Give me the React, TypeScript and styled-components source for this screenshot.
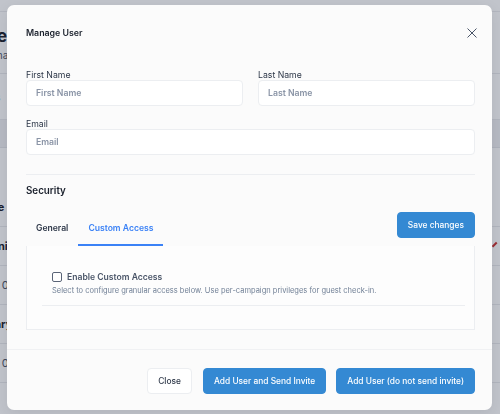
import React, { useState } from "react";
import styled, { createGlobalStyle } from "styled-components";

const GlobalStyle = createGlobalStyle`
  html, body {
    margin: 0;
    padding: 0;
    width: 500px;
    height: 414px;
    overflow: hidden;
    font-family: Inter, "Noto Sans", "Liberation Sans", sans-serif;
    background: #ffffff;
  }
  * { box-sizing: border-box; }
`;

/* ---------- page behind the modal ---------- */

const Page = styled.div`
  width: 500px;
  height: 414px;
  background: #f7f8fa;
  display: flex;
  flex-direction: column;
  padding-top: 11px;
`;

const PageHead = styled.div`
  padding: 14px 0 12px;
  margin-left: -60px;
  border-top: 1px solid #e4e6ea;
  border-bottom: 1px solid #e2e4e8;
`;

const PageTitle = styled.div`
  font-size: 17px;
  font-weight: 700;
  color: #1a202c;
  line-height: 20px;
`;

const PageSub = styled.div`
  font-size: 10px;
  color: #4a5568;
  margin-top: 3px;
`;

const PageFilter = styled.div`
  margin-left: -40px;
  height: 46px;
  display: flex;
  align-items: center;
  font-size: 10px;
  color: #718096;
  border-bottom: 1px solid #e2e4e8;
`;

const TableHeadBand = styled.div`
  height: 28px;
  background: #e9ebef;
  border-bottom: 1px solid #dde0e5;
  margin-bottom: 40px;
`;

const Row = styled.div<{ $accent?: boolean }>`
  height: 39px;
  display: flex;
  align-items: center;
  justify-content: space-between;
  border-bottom: 1px solid #e2e4e8;
  font-size: 11px;
  font-weight: ${(p) => (p.$accent ? 700 : 400)};
  color: ${(p) => (p.$accent ? "#1a202c" : "#4a5568")};
`;

const RowLead = styled.span`
  margin-left: -30px;
`;

const RowMark = styled.span<{ $show?: boolean }>`
  width: 6px;
  height: 6px;
  margin-right: 1px;
  border-top: 2px solid ${(p) => (p.$show ? "#c53030" : "transparent")};
  transform: rotate(-45deg);
`;

/* ---------- modal ---------- */

const Overlay = styled.div`
  position: fixed;
  inset: 0;
  background: rgba(30, 40, 62, 0.25);
`;

const Modal = styled.div`
  position: fixed;
  top: 5px;
  left: 7px;
  width: 485px;
  height: 405px;
  background: #fbfbfb;
  border-radius: 7px;
  display: flex;
  flex-direction: column;
  box-shadow: 0 4px 14px rgba(0, 0, 0, 0.08);
`;

const Header = styled.div`
  display: flex;
  align-items: center;
  justify-content: space-between;
  padding: 18px 14px 0 19px;
  height: 38px;
`;

const Title = styled.div`
  font-size: 8.8px;
  line-height: 20px;
  font-weight: 600;
  color: #1a202c;
`;

const CloseIcon = styled.button`
  border: none;
  background: none;
  padding: 0;
  width: 12px;
  height: 12px;
  display: flex;
  cursor: pointer;
`;

const Body = styled.div`
  padding: 26px 17px 0 19px;
  flex: 1;
  display: flex;
  flex-direction: column;
`;

const FieldRow = styled.div`
  display: grid;
  grid-template-columns: 1fr 1fr;
  gap: 15px;
`;

const Field = styled.div`
  display: flex;
  flex-direction: column;
`;

const Label = styled.label`
  font-size: 8.7px;
  line-height: 13px;
  color: #2d3748;
  margin-bottom: -2px;
`;

const Input = styled.input`
  height: 26px;
  border: 1px solid #eceef1;
  border-radius: 4px;
  background: #ffffff;
  padding: 0 9px;
  font-family: inherit;
  font-size: 8.7px;
  font-weight: 600;
  color: #2d3748;
  outline: none;

  &::placeholder {
    color: #8a94a6;
  }
`;

const FieldStack = styled.div`
  display: flex;
  flex-direction: column;
  gap: 12px;
`;

const Divider = styled.hr`
  border: none;
  border-top: 1px solid #eceef1;
  margin: 19px 0 7px;
`;

const SectionTitle = styled.div`
  font-size: 9.8px;
  font-weight: 600;
  line-height: 18px;
  color: #1a202c;
`;

const TabsBar = styled.div`
  display: flex;
  align-items: flex-start;
  justify-content: space-between;
  margin-top: 12px;
`;

const TabList = styled.div`
  display: flex;
`;

const Tab = styled.button<{ $active?: boolean }>`
  border: none;
  background: none;
  font-family: inherit;
  font-size: 8.6px;
  font-weight: 600;
  height: 34px;
  padding: 0 10px;
  color: ${(p) => (p.$active ? "#3b82f6" : "#2d3748")};
  border-bottom: 2px solid ${(p) => (p.$active ? "#3b82f6" : "transparent")};
  cursor: pointer;
`;

const Button = styled.button<{ $variant?: "primary" | "ghost" }>`
  height: 26px;
  padding: 0 10px;
  border-radius: 4px;
  font-family: inherit;
  font-size: 8.4px;
  font-weight: 500;
  cursor: pointer;
  white-space: nowrap;
  border: 1px solid
    ${(p) => (p.$variant === "ghost" ? "#eceef1" : "#3489d3")};
  background: ${(p) => (p.$variant === "ghost" ? "#ffffff" : "#3489d3")};
  color: ${(p) => (p.$variant === "ghost" ? "#2d3748" : "#ffffff")};
`;

const Panel = styled.div`
  height: 84px;
  border: 1px solid #eceef1;
  border-top: none;
  background: #fdfdfd;
  padding: 26px 9px 0 15px;
`;

const CheckItem = styled.div`
  padding: 0 0 10px 10px;
  border-bottom: 1px solid #eceef1;
`;

const CheckLine = styled.label`
  display: flex;
  align-items: center;
  gap: 5px;
  font-size: 8.6px;
  font-weight: 600;
  color: #4a5568;
  cursor: pointer;
`;

const Box = styled.input`
  appearance: none;
  margin: 0;
  width: 10px;
  height: 10px;
  border: 1px solid #5a6477;
  border-radius: 2px;
  background: #ffffff;

  &:checked {
    background: #3182ce;
    border-color: #3182ce;
  }
`;

const Hint = styled.div`
  margin-top: 4px;
  font-size: 7.5px;
  color: #718096;
`;

const Footer = styled.div`
  border-top: 1px solid #f0f1f3;
  padding: 18px 17px 16px;
  display: flex;
  justify-content: flex-end;
  gap: 10px;
`;

const CloseButton = styled(Button)`
  margin-right: 1px;
`;

export default function App() {
  const [tab, setTab] = useState("custom");
  const [custom, setCustom] = useState(false);

  return (
    <>
      <GlobalStyle />
      <Page>
        <PageHead>
          <PageTitle>Manage Users</PageTitle>
          <PageSub>Add and manage your team</PageSub>
        </PageHead>
        <PageFilter>
          <span>All users</span>
        </PageFilter>
        <TableHeadBand />
        <Row $accent>
          <RowLead>Active</RowLead>
          <RowMark />
        </Row>
        <Row $accent>
          <RowLead>Admini</RowLead>
          <RowMark $show />
        </Row>
        <Row>
          <RowLead>Team 0</RowLead>
          <RowMark />
        </Row>
        <Row $accent>
          <RowLead>Primary</RowLead>
          <RowMark />
        </Row>
        <Row>
          <RowLead>Team 0</RowLead>
          <RowMark />
        </Row>
      </Page>
      <Overlay />
      <Modal>
        <Header>
          <Title>Manage User</Title>
          <CloseIcon aria-label="Close">
            <svg width="12" height="12" viewBox="0 0 12 12">
              <path
                d="M1.5 1.5 L10.5 10.5 M10.5 1.5 L1.5 10.5"
                stroke="#4a5568"
                strokeWidth="1"
                fill="none"
              />
            </svg>
          </CloseIcon>
        </Header>
        <Body>
          <FieldStack>
            <FieldRow>
              <Field>
                <Label>First Name</Label>
                <Input placeholder="First Name" />
              </Field>
              <Field>
                <Label>Last Name</Label>
                <Input placeholder="Last Name" />
              </Field>
            </FieldRow>
            <Field>
              <Label>Email</Label>
              <Input placeholder="Email" />
            </Field>
          </FieldStack>
          <Divider />
          <SectionTitle>Security</SectionTitle>
          <TabsBar>
            <TabList>
              <Tab $active={tab === "general"} onClick={() => setTab("general")}>
                General
              </Tab>
              <Tab $active={tab === "custom"} onClick={() => setTab("custom")}>
                Custom Access
              </Tab>
            </TabList>
            <Button>Save changes</Button>
          </TabsBar>
          <Panel>
            <CheckItem>
              <CheckLine>
                <Box
                  type="checkbox"
                  checked={custom}
                  onChange={(e) => setCustom(e.target.checked)}
                />
                Enable Custom Access
              </CheckLine>
              <Hint>
                Select to configure granular access below. Use per-campaign
                privileges for guest check-in.
              </Hint>
            </CheckItem>
          </Panel>
        </Body>
        <Footer>
          <CloseButton $variant="ghost">Close</CloseButton>
          <Button>Add User and Send Invite</Button>
          <Button>Add User (do not send invite)</Button>
        </Footer>
      </Modal>
    </>
  );
}
